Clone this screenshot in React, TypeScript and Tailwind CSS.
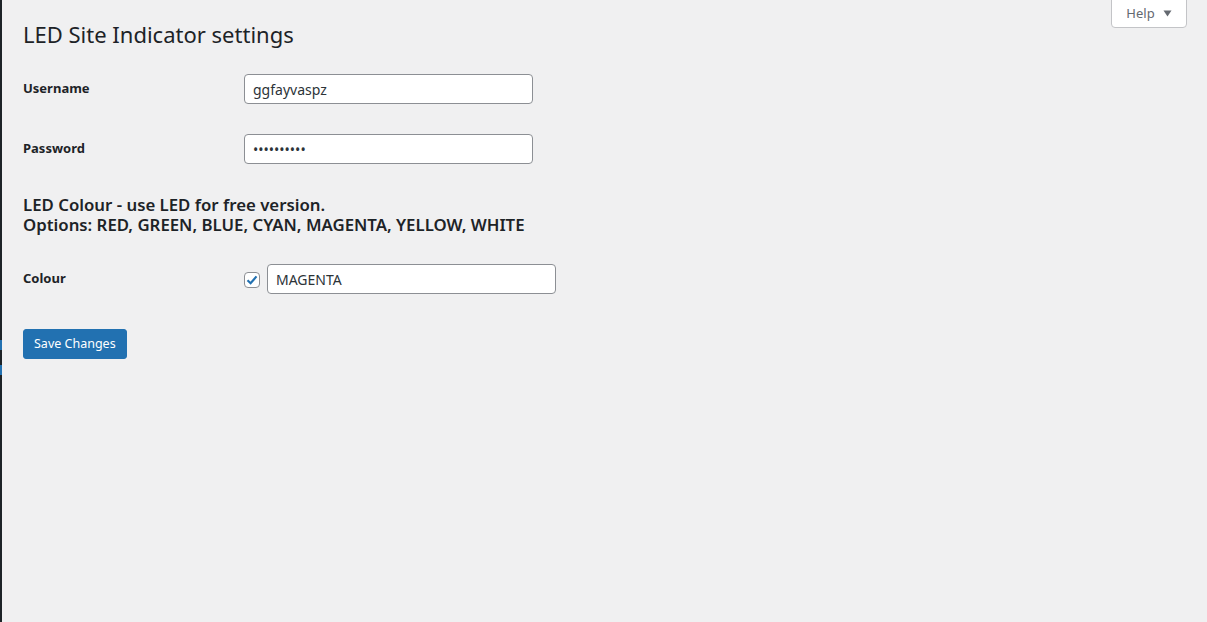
import React from "react";

const font = { fontFamily: '"Noto Sans", "Open Sans", sans-serif' };

function Field({ label, children }: { label: string; children: React.ReactNode }) {
  return (
    <div className="flex items-center h-[60px]">
      <div className="w-[221px] -mt-[1px] text-[13px] font-bold text-[#1d2327]">{label}</div>
      <div className="flex items-center">{children}</div>
    </div>
  );
}

export default function App() {
  return (
    <main className="w-full h-screen flex bg-[#f0f0f1]" style={font}>
      <div className="w-[2px] h-full flex flex-col bg-[#1d2327]">
        <div className="h-[340px] shrink-0" />
        <div className="h-[10px] shrink-0 bg-[#2271b1]" />
        <div className="h-[15px] shrink-0" />
        <div className="h-[10px] shrink-0 bg-[#2271b1]" />
      </div>
      <div className="flex-1 flex flex-col pl-[21px] pr-[20px]">
        <div className="flex justify-between items-start">
          <h1 className="pt-[20px] text-[22px] leading-[28px] font-normal text-[#1d2327]">
            LED Site Indicator settings
          </h1>
          <button className="h-[29px] w-[76px] -mt-px flex items-center justify-center gap-[8px] bg-white border border-[#c3c4c7] rounded-b-[4px] text-[13px] text-[#646970]">
            Help
            <svg width="9" height="7" viewBox="0 0 9 7">
              <path d="M0.5 0.5 H8.5 L4.5 6.5 Z" fill="#646970" />
            </svg>
          </button>
        </div>

        <div className="flex flex-col mt-[11px]">
          <Field label="Username">
            <input
              type="text"
              defaultValue="ggfayvaspz"
              className="h-[30px] w-[289px] px-[8px] bg-white border border-[#8c8f94] rounded-[4px] text-[14px] text-[#2c3338] outline-none"
            />
          </Field>
          <Field label="Password">
            <input
              type="password"
              defaultValue="ggfayvaspz"
              className="h-[30px] w-[289px] px-[8px] bg-white border border-[#8c8f94] rounded-[4px] text-[14px] text-[#2c3338] outline-none"
            />
          </Field>
        </div>

        <h2 className="mt-[16px] text-[16.8px] leading-[20px] font-semibold text-[#1d2327]">
          LED Colour - use LED for free version.
          <br />
          Options: RED, GREEN, BLUE, CYAN, MAGENTA, YELLOW, WHITE
        </h2>

        <div className="mt-[14px]">
          <Field label="Colour">
            <span className="w-[16px] h-[16px] mt-[2px] flex items-center justify-center bg-white border border-[#8c8f94] rounded-[4px]">
              <svg width="14" height="14" viewBox="0 0 14 14">
                <path d="M2.5 7.2 L5.6 10.2 L11.5 3.4" fill="none" stroke="#2271b1" strokeWidth="2.2" />
              </svg>
            </span>
            <input
              type="text"
              defaultValue="MAGENTA"
              className="ml-[7px] h-[30px] w-[289px] px-[8px] bg-white border border-[#8c8f94] rounded-[4px] text-[14px] text-[#2c3338] outline-none"
            />
          </Field>
        </div>

        <div className="mt-[20px]">
          <button className="h-[30px] px-[10px] bg-[#2271b1] border border-[#2271b1] rounded-[3px] text-[12.5px] text-white">
            Save Changes
          </button>
        </div>
      </div>
    </main>
  );
}
